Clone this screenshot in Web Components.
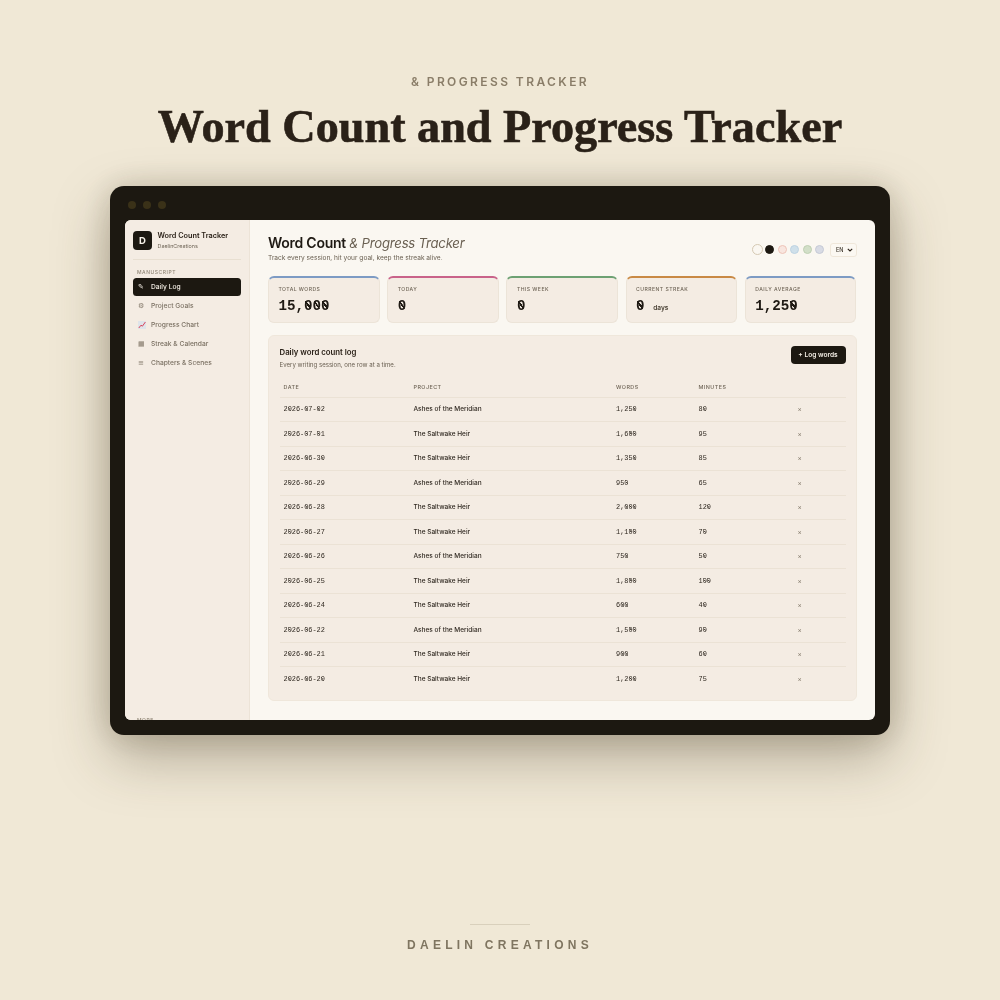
<!doctype html>
<html><head><meta charset="utf-8"><title>Word Count and Progress Tracker</title>
<style>
html,body{margin:0;padding:0;height:1000px;overflow:hidden;background:#f0e8d6}
body{font-family:"Inter","Liberation Sans",sans-serif}
</style></head><body>
<promo-page>
  <span slot="eyebrow">&amp; PROGRESS TRACKER</span>
  <span slot="title">Word Count and Progress Tracker</span>
  <span slot="brand">DAELIN CREATIONS</span>
  <app-window>
    <side-bar slot="side">
      <nav-item active icon="✎">Daily Log</nav-item>
      <nav-item icon="⚙">Project Goals</nav-item>
      <nav-item chart>Progress Chart</nav-item>
      <nav-item icon="▦">Streak &amp; Calendar</nav-item>
      <nav-item icon="≡">Chapters &amp; Scenes</nav-item>
    </side-bar>
    <main-pane>
      <stat-card accent="#7d9bc4" label="TOTAL WORDS" value="15,000"></stat-card>
      <stat-card accent="#c9638a" label="TODAY" value="0"></stat-card>
      <stat-card accent="#6da173" label="THIS WEEK" value="0"></stat-card>
      <stat-card accent="#c98a45" label="CURRENT STREAK" value="0" unit="days"></stat-card>
      <stat-card accent="#7d9bc4" label="DAILY AVERAGE" value="1,250"></stat-card>
      <log-card slot="log"></log-card>
    </main-pane>
  </app-window>
</promo-page>
<script>
function def(name, css, html){
  customElements.define(name, class extends HTMLElement{
    connectedCallback(){
      if(this.shadowRoot) return;
      const r=this.attachShadow({mode:'open'});
      r.innerHTML='<style>'+css+'</style>'+(typeof html==='function'?html(this):html);
    }
  });
}
const MONO='"Liberation Mono","DejaVu Sans Mono",monospace';
const SANS='"Inter","Liberation Sans",sans-serif';
const Z=`.z{background:linear-gradient(to top right,transparent 42%,currentColor 42%,currentColor 58%,transparent 58%) 50% 42%/72% 52% no-repeat}`;
const Z2=`.z{background:linear-gradient(to top right,transparent 44%,rgba(47,40,32,.55) 44%,rgba(47,40,32,.55) 56%,transparent 56%) 50% 42%/72% 52% no-repeat}`;
const zero=s=>s.replace(/0/g,'<span class="z">0</span>');

def('promo-page',`
:host{display:flex;flex-direction:column;align-items:center;height:1000px;box-sizing:border-box;padding-top:75px;color:#2a2118;filter:blur(.3px)}
.eyebrow{font:600 12px/14px ${SANS};letter-spacing:2.4px;color:#8a7d68;height:14px}
h1{margin:9px 0 0;font:700 46.2px/58px "Liberation Serif",serif;color:#2a2118;height:68px;-webkit-text-stroke:.6px #2a2118}
.win{margin-top:20px}
footer{margin-top:189px;display:flex;flex-direction:column;align-items:center;gap:13px}
hr{width:60px;height:1px;margin:0;border:0;background:#d9d0bc}
.brand{font:600 12px/14px "Liberation Sans",sans-serif;letter-spacing:4.25px;color:#7f7560}
`,`<div class="eyebrow"><slot name="eyebrow"></slot></div>
<h1><slot name="title"></slot></h1>
<div class="win"><slot></slot></div>
<footer><hr><div class="brand"><slot name="brand"></slot></div></footer>`);

def('app-window',`
:host{display:block;width:780px;height:549px;box-sizing:border-box;background:#1c1811;border-radius:14px;padding:0 15px 15px 14.5px;
 box-shadow:0 22px 55px rgba(70,58,35,.36),0 0 30px rgba(70,58,35,.2)}
.bar{height:34px;display:flex;align-items:center;gap:7px;padding:4px 0 0 3px;box-sizing:border-box}
.bar i{width:8px;height:8px;border-radius:50%;background:#3a3118}
.inner{height:500px;display:flex;background:#faf7f1;border-radius:6px;overflow:hidden}
`,`<div class="bar"><i></i><i></i><i></i></div><div class="inner"><slot name="side"></slot><slot></slot></div>`);

def('side-bar',`
:host{display:block;width:125.5px;flex:none;box-sizing:border-box;background:#f4ece3;border-right:1px solid #ece3d7;padding:11px 8px 0 8.5px;overflow:hidden;height:500px;font-family:${SANS}}
.brand{display:flex;gap:5.5px;align-items:flex-start;padding-bottom:8px;border-bottom:1px solid #e8dfd1}
.logo{width:19px;height:19px;border-radius:4px;background:#1c1811;color:#f7f2e9;display:flex;align-items:center;justify-content:center;font:700 9.5px ${SANS};flex:none}
.t{font:600 7.3px/10px ${SANS};color:#2a2118;white-space:nowrap}
.s{font:400 5.4px/9px ${SANS};color:#6f6557;margin-top:1px}
.lab{font:500 5px/7px ${SANS};letter-spacing:.55px;color:#8f8575;padding:9px 4px 2.3px}
.more{position:absolute;top:486px;left:4px;padding:0}
nav{display:flex;flex-direction:column}
.wrap{position:relative;height:100%}
`,`<div class="wrap"><div class="brand"><div class="logo">D</div><div><div class="t">Word Count Tracker</div><div class="s">DaelinCreations</div></div></div>
<div class="lab">MANUSCRIPT</div><nav><slot></slot></nav><div class="lab more">MORE</div></div>`);

def('nav-item',`
:host{display:flex;align-items:center;height:17.5px;margin-bottom:1.4px;border-radius:3.5px;padding-left:5px;color:#7b7163;font:500 6.7px/10px ${SANS};white-space:nowrap}
:host([active]){background:#1c1811;color:#f5efe6}
.i{width:13px;flex:none;font:7px/10px "DejaVu Sans",sans-serif;color:#857b6c;display:flex;align-items:center}
:host([active]) .i{color:#f5efe6}
svg{display:block}
`,h=>`<span class="i">${h.hasAttribute('chart')?`<svg width="8" height="8" viewBox="0 0 8 8"><rect width="8" height="8" fill="#dfe4ea"/><path d="M.8 7 3 4.2 4.4 5.2 7.4 1" fill="none" stroke="#d8435a" stroke-width="1"/></svg>`:h.getAttribute('icon')}</span><slot></slot>`);

def('main-pane',`
:host{display:block;flex:1;min-width:0;box-sizing:border-box;padding:13.5px 18.5px 0 18px;font-family:${SANS}}
.head{display:flex;justify-content:space-between;height:42.5px}
h2{margin:0;font:600 14px/18px ${SANS};color:#1f1a14;letter-spacing:-.25px;white-space:nowrap}
h2 em{font-weight:400;font-size:13.2px;color:#6a6052;letter-spacing:-.25px}
p{margin:1px 0 0;font:400 6.6px/10px ${SANS};color:#6a6052}
.ctl{display:flex;align-items:center;gap:3px;padding-top:5px;height:22px}
.d{width:7px;height:7px;border-radius:50%;border:1px solid;margin-right:.5px}
.lang{margin-left:2px;width:27px;height:14px;box-sizing:border-box;border:1px solid #efe7da;border-radius:3px;background:#fbf8f2;font:500 5.5px/12px ${SANS};color:#3b342a;display:flex;align-items:center;justify-content:space-between;padding:0 2.5px 0 5.5px}
.stats{display:grid;grid-template-columns:repeat(5,1fr);gap:7.5px;height:47px}
.log{margin-top:12px}
`,`<div class="head"><div><h2>Word Count <em>&amp; Progress Tracker</em></h2><p>Track every session, hit your goal, keep the streak alive.</p></div>
<div class="ctl"><span class="d" style="background:#faf7f1;border-color:#d5c9b3;width:9px;height:9px;margin-right:-1px"></span><span class="d" style="background:#1c1811;border-color:#1c1811"></span><span class="d" style="background:#f8e6df;border-color:#eec4b8"></span><span class="d" style="background:#cfe0ea;border-color:#bed3e2"></span><span class="d" style="background:#d2dfc8;border-color:#bfd0b3"></span><span class="d" style="background:#d8dbe4;border-color:#c6cad6"></span>
<span class="lang" role="combobox">EN<svg width="6" height="4" viewBox="0 0 6 4"><path d="M.8.8 3 3 5.2.8" fill="none" stroke="#2a2118" stroke-width="1.1"/></svg></span></div></div>
<div class="stats"><slot></slot></div><div class="log"><slot name="log"></slot></div>`);

def('stat-card',`
:host{display:block;box-sizing:border-box;background:#f4ece3;border:1px solid #ece4d8;border-top:2px solid var(--a);border-radius:6px;padding:8.2px 9.5px 0;min-width:0}
.l{font:500 5.1px/7px ${SANS};letter-spacing:.45px;color:#6f6557;white-space:nowrap}
.v{margin-top:3.5px;font:700 14.2px/18px ${MONO};color:#1f1a14;white-space:nowrap}
.u{font:600 6.6px/10px ${SANS};color:#4a4236}
${Z}
`,h=>{h.style.setProperty('--a',h.getAttribute('accent'));return `<div class="l">${h.getAttribute('label')}</div><div class="v">${zero(h.getAttribute('value'))}${h.getAttribute('unit')?` <span class="u">${h.getAttribute('unit')}</span>`:''}</div>`});

const rows=[['2026-07-02','Ashes of the Meridian','1,250','80'],['2026-07-01','The Saltwake Heir','1,600','95'],['2026-06-30','The Saltwake Heir','1,350','85'],['2026-06-29','Ashes of the Meridian','950','65'],['2026-06-28','The Saltwake Heir','2,000','120'],['2026-06-27','The Saltwake Heir','1,100','70'],['2026-06-26','Ashes of the Meridian','750','50'],['2026-06-25','The Saltwake Heir','1,800','100'],['2026-06-24','The Saltwake Heir','600','40'],['2026-06-22','Ashes of the Meridian','1,500','90'],['2026-06-21','The Saltwake Heir','900','60'],['2026-06-20','The Saltwake Heir','1,200','75']];
def('log-card',`
:host{display:block;box-sizing:border-box;height:366px;background:#f4ece3;border:1px solid #efe7db;border-radius:6px;padding:10px 10px 0 10.5px}
.top{display:flex;justify-content:space-between;height:30px}
h3{margin:1px 0 0;font:600 7.8px/11px ${SANS};color:#2a2118}
p{margin:2px 0 0;font:400 6.1px/9px ${SANS};color:#6a6052}
button{all:unset;box-sizing:border-box;width:55px;height:18px;background:#1c1811;color:#f5efe6;border-radius:4px;font:600 6.6px/18px ${SANS};text-align:center}
table{border-collapse:collapse;table-layout:fixed;width:566px;margin-top:2px}
th{font:500 5.4px/7px ${SANS};letter-spacing:.45px;color:#6f6557;text-align:left;padding:0 4px;height:19px;box-sizing:border-box;border-bottom:1px solid #ebe2d5}
td{height:24.5px;box-sizing:border-box;padding:0 4px;border-bottom:1px solid #ebe2d5;font:400 6.9px/10px ${MONO};color:#2f2820;white-space:nowrap}
td.p{font:500 6.5px/10px ${SANS};color:#2f2820}
td.x{color:#847a6b;font:400 6.5px/10px ${SANS}}
tr:last-child td{border-bottom:0}
${Z2}
`,`<div class="top"><div><h3>Daily word count log</h3><p>Every writing session, one row at a time.</p></div><button>+ Log words</button></div>
<table><colgroup><col style="width:130px"><col style="width:202.5px"><col style="width:82.5px"><col style="width:99px"><col></colgroup>
<thead><tr><th>DATE</th><th>PROJECT</th><th>WORDS</th><th>MINUTES</th><th></th></tr></thead>
<tbody>${rows.map(r=>`<tr><td>${zero(r[0])}</td><td class="p">${r[1]}</td><td>${zero(r[2])}</td><td>${zero(r[3])}</td><td class="x">×</td></tr>`).join('')}</tbody></table>`);
</script>
</body></html>
